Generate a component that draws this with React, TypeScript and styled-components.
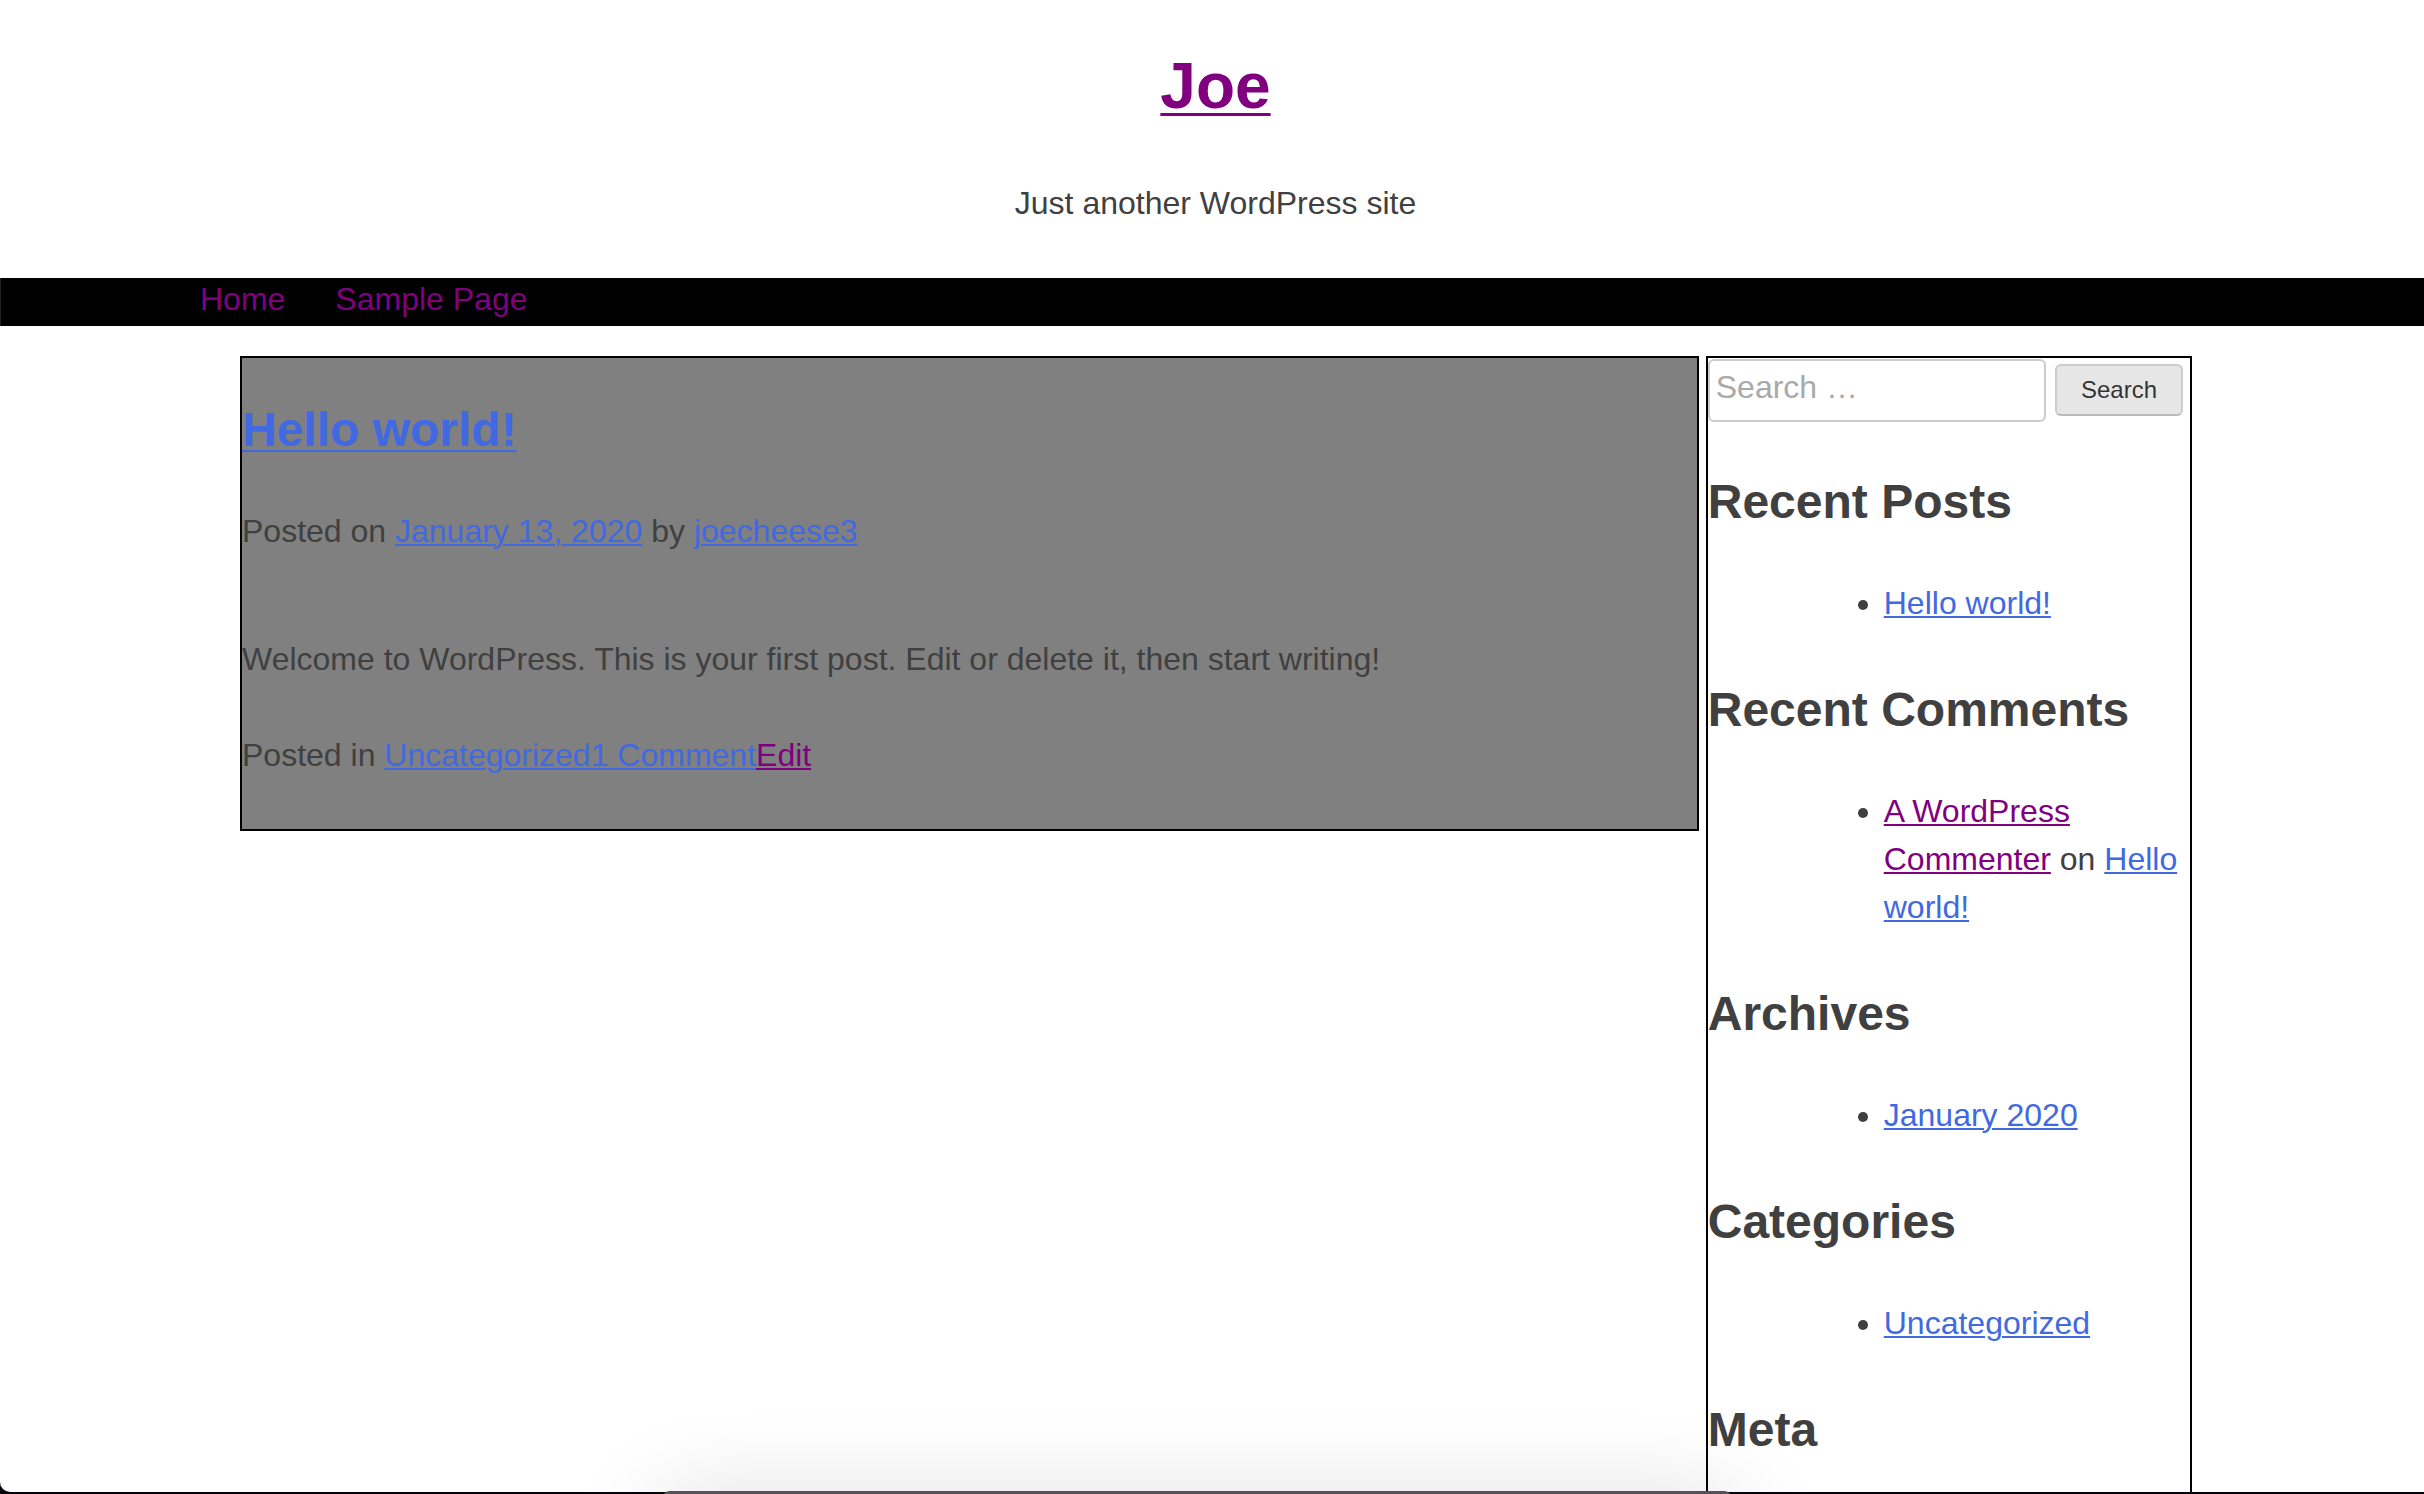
import React from "react";
import styled, { createGlobalStyle } from "styled-components";

const GlobalStyle = createGlobalStyle`
  * { box-sizing: border-box; }
  body {
    margin: 0;
    background: #05040a;
    color: #404040;
    font-family: "Liberation Sans", Arial, Helvetica, sans-serif;
    font-size: 32px;
    line-height: 48px;
  }
`;

const Screen = styled.div`
  position: relative;
  height: 100vh;
  padding-bottom: 2px;
  overflow: hidden;
`;

const Page = styled.div`
  display: flex;
  flex-direction: column;
  height: 100%;
  overflow: hidden;
  background: #fff;
  border-bottom-left-radius: 10px;
`;

const Header = styled.header`
  padding: 38px 0 51px 7px;
  text-align: center;
`;

const SiteTitle = styled.h1`
  margin: 0 0 45px;
  font-size: 64px;
  line-height: 96px;
`;

const Tagline = styled.p`
  margin: 0;
`;

const Link = styled.a<{ $visited?: boolean }>`
  color: ${(p) => (p.$visited ? "#800080" : "#4169e1")};
  text-decoration: underline;
  text-decoration-thickness: 2px;
  text-underline-offset: 2px;

  h1 & {
    text-decoration-thickness: 3px;
    text-underline-offset: 5px;
  }
  h2 & {
    text-underline-offset: 4px;
  }
`;

const Nav = styled.nav`
  flex: none;
  height: 48px;
  padding-left: 199px;
  background: #000;
  border-left: 1px solid #222;
`;

const Menu = styled.ul`
  display: flex;
  gap: 50px;
  margin: 0;
  padding: 0;
  list-style: none;
  line-height: 42px;
`;

const MenuLink = styled.a`
  color: #800080;
  text-decoration: none;
`;

const Content = styled.div`
  flex: 1;
  min-height: 0;
  display: grid;
  grid-template-columns: minmax(0, 3fr) minmax(0, 1fr);
  column-gap: 7px;
  padding: 30px 232px 0 240px;
`;

const Main = styled.main`
  align-self: start;
  padding: 36px 0 50px;
  border: 2px solid #000;
  background: #808080;
`;

const Heading = styled.h2`
  margin: 0 0 41px;
  font-size: 48px;
  line-height: 72px;
`;

const Meta = styled.div`
  margin-bottom: 80px;
`;

const Body = styled.p`
  margin: 0 0 48px;
`;

const Sidebar = styled.aside`
  border: 2px solid #000;
  border-bottom: 0;
`;

const SearchForm = styled.form`
  display: flex;
  align-items: baseline;
  gap: 9px;
  padding: 1px 7px 44px 0;
`;

const SearchField = styled.input`
  flex: 1;
  min-width: 0;
  height: 63px;
  margin: 0;
  padding: 0 6px 6px;
  border: 2px solid #ccc;
  border-radius: 6px;
  background: #fff;
  color: #666;
  font: inherit;

  &::placeholder {
    color: #a9a9a9;
    opacity: 1;
  }
`;

const SearchButton = styled.button`
  width: 128px;
  height: 52px;
  margin: 0;
  padding: 0;
  border: 2px solid;
  border-color: #ccc #ccc #bbb;
  border-radius: 6px;
  background: #e6e6e6;
  color: rgba(0, 0, 0, 0.8);
  font-family: inherit;
  font-size: 24px;
  line-height: 24px;
`;

const Widget = styled.section`
  margin-bottom: 47px;
`;

const WidgetList = styled.ul`
  margin: 0;
  padding-left: 176px;
`;

const Dock = styled.div`
  position: absolute;
  left: 662px;
  right: 692px;
  bottom: -60px;
  height: 63px;
  border-radius: 8px;
  background: #555356;
  box-shadow: 0 20px 100px rgba(0, 0, 0, 0.2);
`;

const widgets: { title: string; items?: React.ReactNode[] }[] = [
  { title: "Recent Posts", items: [<Link href="#hello-world">Hello world!</Link>] },
  {
    title: "Recent Comments",
    items: [
      <>
        <Link href="#commenter" $visited>A WordPress Commenter</Link> on{" "}
        <Link href="#hello-world">Hello world!</Link>
      </>,
    ],
  },
  { title: "Archives", items: [<Link href="#2020-01">January 2020</Link>] },
  { title: "Categories", items: [<Link href="#uncategorized">Uncategorized</Link>] },
  { title: "Meta" },
];

export default function App() {
  return (
    <Screen>
      <GlobalStyle />
      <Page>
        <Header>
          <SiteTitle>
            <Link href="#home" $visited>Joe</Link>
          </SiteTitle>
          <Tagline>Just another WordPress site</Tagline>
        </Header>
        <Nav>
          <Menu>
            <li><MenuLink href="#home">Home</MenuLink></li>
            <li><MenuLink href="#sample-page">Sample Page</MenuLink></li>
          </Menu>
        </Nav>
        <Content>
          <Main>
            <article>
              <Heading>
                <Link href="#hello-world">Hello world!</Link>
              </Heading>
              <Meta>
                Posted on <Link href="#date">January 13, 2020</Link> by{" "}
                <Link href="#author">joecheese3</Link>
              </Meta>
              <Body>
                Welcome to WordPress. This is your first post. Edit or delete it, then start writing!
              </Body>
              <footer>
                Posted in <Link href="#uncategorized">Uncategorized</Link>
                <Link href="#comments">1 Comment</Link>
                <Link href="#edit" $visited>Edit</Link>
              </footer>
            </article>
          </Main>
          <Sidebar>
            <SearchForm role="search" onSubmit={(e) => e.preventDefault()}>
              <SearchField type="search" aria-label="Search for:" placeholder="Search …" />
              <SearchButton type="submit">Search</SearchButton>
            </SearchForm>
            {widgets.map((w) => (
              <Widget key={w.title}>
                <Heading>{w.title}</Heading>
                {w.items && (
                  <WidgetList>
                    {w.items.map((item, i) => (
                      <li key={i}>{item}</li>
                    ))}
                  </WidgetList>
                )}
              </Widget>
            ))}
          </Sidebar>
        </Content>
      </Page>
      <Dock />
    </Screen>
  );
}
